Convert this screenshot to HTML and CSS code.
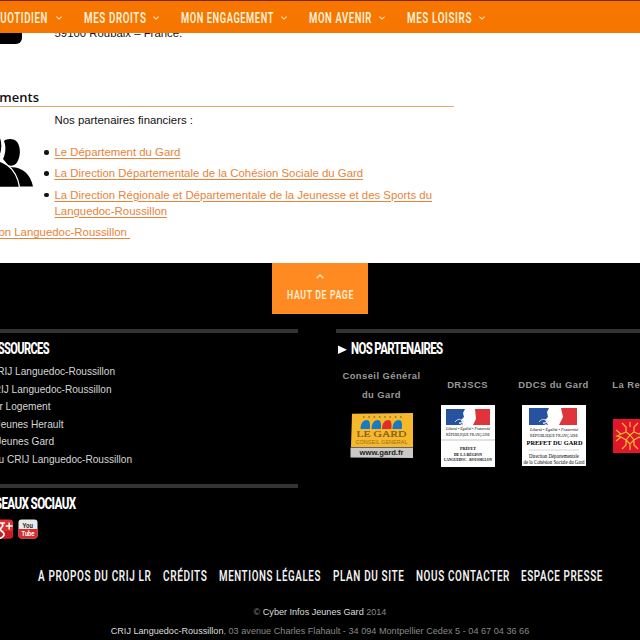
FILE: index.html
```html
<!DOCTYPE html>
<html lang="fr">
<head>
<meta charset="utf-8">
<title>Cyber Infos Jeunes Gard</title>
<link rel="stylesheet" href="styles.css">
</head>
<body>
<header class="topbar">
  <nav class="menu">
    <a class="entry"><svg class="cond" width="55" height="20"><text x="0" y="15" textLength="55" lengthAdjust="spacingAndGlyphs">QUOTIDIEN</text></svg><svg class="chev" viewBox="0 0 6 4"><path d="M.4.6 3 3.1 5.6.6"/></svg></a>
    <a class="entry"><svg class="cond" width="62" height="20"><text x="0" y="15" textLength="62.5" lengthAdjust="spacingAndGlyphs">MES DROITS</text></svg><svg class="chev" viewBox="0 0 6 4"><path d="M.4.6 3 3.1 5.6.6"/></svg></a>
    <a class="entry"><svg class="cond" width="92" height="20"><text x="0" y="15" textLength="93" lengthAdjust="spacingAndGlyphs">MON ENGAGEMENT</text></svg><svg class="chev" viewBox="0 0 6 4"><path d="M.4.6 3 3.1 5.6.6"/></svg></a>
    <a class="entry"><svg class="cond" width="62.500" height="20"><text x="0" y="15" textLength="63" lengthAdjust="spacingAndGlyphs">MON AVENIR</text></svg><svg class="chev" viewBox="0 0 6 4"><path d="M.4.6 3 3.1 5.6.6"/></svg></a>
    <a class="entry"><svg class="cond" width="64" height="20"><text x="0" y="15" textLength="65" lengthAdjust="spacingAndGlyphs">MES LOISIRS</text></svg><svg class="chev" viewBox="0 0 6 4"><path d="M.4.6 3 3.1 5.6.6"/></svg></a>
  </nav>
</header>

<main class="content">
  <section class="contact">
    <div class="tile"></div>
    <p class="address">59100 Roubaix – France.</p>
  </section>
  <h2 class="title"><span>Financements</span></h2>
  <section class="funding">
    <svg class="people" width="36" height="56" viewBox="0 0 36 56">
      <path d="M4 10C7 7.500 14 7 17.500 11.500 21 17 20.500 26 17 31.500 14.500 35 10.500 35.500 8 34L3 28C6 22 6 15 4 10z"/>
      <path d="M9 36.500c11-1.500 21 5 24 19H10z"/>
      <path class="front" d="M-14 30C2 26 17 37 19.500 56.500H-14z"/>
      <ellipse class="front" cx="-8" cy="15" rx="10" ry="16"/>
    </svg>
    <div class="text">
      <p>Nos partenaires financiers :</p>
      <ul>
        <li><a>Le Département du Gard</a></li>
        <li><a>La Direction Départementale de la Cohésion Sociale du Gard</a></li>
        <li><a>La Direction Régionale et Départementale de la Jeunesse et des Sports du<br>Languedoc-Roussillon</a></li>
      </ul>
    </div>
  </section>
  <p class="region"><a>La Région Languedoc-Roussillon&nbsp;</a></p>
</main>

<footer class="footer">
  <a class="totop">
    <svg class="up" viewBox="0 0 8 5"><path d="M.7 4.300 4 1 7.300 4.300"/></svg>
    <svg class="cond small" width="67" height="14"><text x="0" y="12" textLength="67" lengthAdjust="spacingAndGlyphs">HAUT DE PAGE</text></svg>
  </a>
  <div class="columns">
    <div class="left">
      <section class="box resources">
        <h3><svg class="head" width="50" height="18"><text x="-14.500" y="15" textLength="63.500" lengthAdjust="spacingAndGlyphs">RESSOURCES</text></svg></h3>
        <ul class="links">
          <li style="width:115px">Le site du CRIJ Languedoc-Roussillon</li>
          <li style="width:111.500px">Le blog CRIJ Languedoc-Roussillon</li>
          <li style="width:50.500px">Trouver Logement</li>
          <li style="width:63.500px">Cyber Infos Jeunes Herault</li>
          <li style="width:54px">Cyber Infos Jeunes Gard</li>
          <li style="width:132px">Facebook du CRIJ Languedoc-Roussillon</li>
        </ul>
      </section>
      <section class="box">
        <h3><svg class="head" width="77" height="18"><text x="-18" y="15" textLength="93.500" lengthAdjust="spacingAndGlyphs">RÉSEAUX SOCIAUX</text></svg></h3>
        <div class="social">
          <svg width="13" height="20" viewBox="0 0 13 20">
            <rect x="-7" y=".5" width="20" height="19" rx="3" fill="#dc2f2e"/>
            <path d="M-7 12H13V17Q13 19.500 10 19.500H-7z" fill="#c81d21"/>
            <path d="M5 4H-1M2 4.500C5 8-1 9 .500 11S6 14 3 17.500-4 18-4 18" fill="none" stroke="#fff" stroke-width="1.700"/>
            <path d="M9.200 3.500v7M5.700 7h7" stroke="#fff" stroke-width="1.500"/>
          </svg>
          <svg width="20" height="20" viewBox="0 0 20 20">
            <rect x=".5" y=".5" width="19" height="19" rx="3" fill="#e9e9e9"/>
            <path d="M.500 10h19v6.500q0 3-3 3h-13q-3 0-3-3z" fill="#d92c30"/>
            <text class="yt" x="4.500" y="8.500" textLength="10.500" lengthAdjust="spacingAndGlyphs" fill="#333">You</text>
            <text class="yt" x="3.500" y="17.200" textLength="13" lengthAdjust="spacingAndGlyphs" fill="#fff">Tube</text>
          </svg>
        </div>
      </section>
    </div>
    <section class="box partners">
      <h3><svg class="head" width="110" height="18"><path d="M2 6.500v8.500l9-4.250z"/><text x="15" y="15" textLength="91.500" lengthAdjust="spacingAndGlyphs">NOS PARTENAIRES</text></svg></h3>
      <div class="logos">
        <figure>
          <figcaption>Conseil Général<br>du Gard</figcaption>
          <svg width="64" height="46" viewBox="0 0 64 46">
            <path d="M2 .800 63 0v34H1z" fill="#f6b92c"/>
            <path d="M.500 34.500H63V45L.500 44.500z" fill="#c9c9c9"/>
            <path d="M13 4h39" stroke="#8c6b2b" stroke-width="1.500" stroke-dasharray="1.500 3.800"/>
            <g fill="#197bbd"><path d="M10.500 16c0-6 3-9 6.500-9 2.500 0 3.500 3 2.800 9z"/><path d="M21.500 16c0-6 3-9 6.500-9 2.500 0 3.500 3 2.800 9z"/><path d="M32 16c0-6 3-9 6.500-9 2.500 0 3.500 3 2.800 9z" fill="#df2d2b"/><path d="M42.500 16c0-6 3-9 6.500-9 2.500 0 3.500 3 2.800 9z"/></g>
            <text class="serif" x="6.500" y="24" font-size="9" textLength="50" lengthAdjust="spacingAndGlyphs" fill="#7d5420" stroke="#7d5420" stroke-width=".2">LE GARD</text>
            <text class="sans" x="5.500" y="31.300" font-size="5" textLength="52" lengthAdjust="spacingAndGlyphs" fill="#a06b1c">CONSEIL GENERAL</text>
            <text class="sans bold" x="9.500" y="42" font-size="7" textLength="44" lengthAdjust="spacingAndGlyphs" fill="#222">www.gard.fr</text>
          </svg>
        </figure>
        <figure>
          <figcaption>DRJSCS</figcaption>
          <svg width="54" height="62" viewBox="0 0 54 62">
            <path fill="#fff" d="M0 0h54v62H0z"/>
            <path fill="#26529f" d="M5 4h19l-2 4 1 4-3 3 2 5H5z"/><path fill="#df343a" d="M34 4h15v16H32l3-6z"/>
            <path d="M14 17c3-4 6-3 9 0l-5 1 4 2" fill="none" stroke="#dce4f2"/>
            <text class="serif it" x="5" y="25" font-size="4" textLength="44" lengthAdjust="spacingAndGlyphs">Liberté • Égalité • Fraternité</text>
            <text class="serif" x="5" y="31" font-size="4.500" textLength="44" lengthAdjust="spacingAndGlyphs">RÉPUBLIQUE FRANÇAISE</text>
            <path d="M0 35h54" stroke="#aaa" stroke-width=".7"/>
            <g class="serif bold" font-size="4.300"><text x="19" y="44.500" textLength="16" lengthAdjust="spacingAndGlyphs">PRÉFET</text><text x="13" y="50.500" textLength="28" lengthAdjust="spacingAndGlyphs">DE LA RÉGION</text><text x="3" y="56" textLength="48" lengthAdjust="spacingAndGlyphs">LANGUEDOC - ROUSSILLON</text></g>
          </svg>
        </figure>
        <figure>
          <figcaption>DDCS du Gard</figcaption>
          <svg width="64" height="61" viewBox="0 0 64 61">
            <path fill="#fff" d="M0 0h64v61H0z"/>
            <path fill="#26529f" d="M7 3h20l-2 4 1 5-3 3 3 5H7z"/><path fill="#df343a" d="M39 3h16v17H37l4-8z"/>
            <path d="M17 17c3-4 6-3 10 0l-6 1 4 2" fill="none" stroke="#dce4f2"/>
            <text class="serif it" x="8" y="25.500" font-size="4.300" textLength="48" lengthAdjust="spacingAndGlyphs">Liberté • Égalité • Fraternité</text>
            <text class="serif" x="8" y="32" font-size="4.700" textLength="48" lengthAdjust="spacingAndGlyphs">RÉPUBLIQUE FRANÇAISE</text>
            <text class="serif bold" x="4.500" y="40" font-size="6.300" textLength="56" lengthAdjust="spacingAndGlyphs">PREFET DU GARD</text>
            <path d="M7 45h50" stroke="#aaa" stroke-width=".5"/>
            <text class="serif" x="7" y="53" font-size="5.400" textLength="50" lengthAdjust="spacingAndGlyphs">Direction Départementale</text>
            <text class="serif" x="1.500" y="59" font-size="5.400" textLength="61" lengthAdjust="spacingAndGlyphs">de la Cohésion Sociale du Gard</text>
          </svg>
        </figure>
        <figure class="last">
          <figcaption>La Region</figcaption>
          <svg width="54" height="34" viewBox="0 0 54 34">
            <path fill="#e1162a" d="M0 0h54v34H0z"/>
            <g fill="none" stroke="#f7bd35" stroke-width="1.200"><path d="m9 4 4 4v5l4 3 4-3V8l4-4M17 3v5M3 11l5 4 5-2M3 22l5-4 5 3M8 15l-4 2 4 1M13 13l4 3-4 5M17 16l4 5-4 4-4-4M9 30l4-4v-5M17 25v6M25 30l-4-4v-5M21 13l5 2 5-4M21 21l5-3 5 4"/></g>
          </svg>
        </figure>
      </div>
    </section>
  </div>
  <nav class="footnav">
    <svg class="cond" width="113" height="18"><text x="0" y="14" textLength="113.500" lengthAdjust="spacingAndGlyphs">A PROPOS DU CRIJ LR</text></svg>
    <svg class="cond" width="44" height="18"><text x="0" y="14" textLength="44.500" lengthAdjust="spacingAndGlyphs">CRÉDITS</text></svg>
    <svg class="cond" width="101.500" height="18"><text x="0" y="14" textLength="102" lengthAdjust="spacingAndGlyphs">MENTIONS LÉGALES</text></svg>
    <svg class="cond" width="71" height="18"><text x="0" y="14" textLength="71.500" lengthAdjust="spacingAndGlyphs">PLAN DU SITE</text></svg>
    <svg class="cond" width="93.500" height="18"><text x="0" y="14" textLength="94" lengthAdjust="spacingAndGlyphs">NOUS CONTACTER</text></svg>
    <svg class="cond" width="82" height="18"><text x="0" y="14" textLength="82" lengthAdjust="spacingAndGlyphs">ESPACE PRESSE</text></svg>
  </nav>
  <p class="legal"><span class="c">© <b>Cyber Infos Jeunes Gard</b> 2014</span></p>
  <p class="legal"><b class="org">CRIJ Languedoc-Roussillon</b><span class="addr">, 03 avenue Charles Flahault - 34 094 Montpellier Cedex 5 - 04 67 04 36 66</span></p>
</footer>
</body>
</html>
```
FILE: styles.css
```css
* { box-sizing: border-box; margin: 0; padding: 0; }
body {
  width: 640px;
  height: 640px;
  overflow: hidden;
  background: #fff;
  color: #111;
  font: 11.38px/16px "Liberation Sans", Arial, sans-serif;
}
ul { list-style: none; }
svg { display: block; flex: none; }

.cond, .head { overflow: visible; }
.cond text {
  font: 600 14.4px Roboto, sans-serif;
  letter-spacing: .9px;
  fill: currentColor;
}
.cond.small text { font-size: 12.4px; }
.head { fill: #fff; }
.head text { font: 800 16.8px Roboto, sans-serif; letter-spacing: -.9px; }

.topbar {
  height: 33px;
  background: #f67600;
  border-top: 1px solid #7a2608;
  color: #fff3dc;
  overflow: hidden;
}
.menu { display: flex; gap: 22px; margin-left: -7.200px; padding-top: 7px; }
.entry { display: flex; align-items: center; gap: 7.700px; }
.chev { width: 6px; height: 4px; fill: none; stroke: #ffe3bd; stroke-width: 1.1; }

.content { height: 230px; overflow: hidden; }
.contact { display: flex; height: 57px; }
.tile { width: 22px; height: 10.500px; background: #000; border-bottom-right-radius: 6px; }
.address { margin: -8px 0 0 32.500px; }
.title {
  display: flex;
  justify-content: flex-end;
  width: 453.500px;
  height: 16.500px;
  padding-right: 414.500px;
  border-bottom: 1px solid #dfa970;
  font: 600 13px/14px "Open Sans", sans-serif;
  white-space: nowrap;
}
.funding { display: flex; height: 117.500px; padding-top: 5.500px; }
.people { margin: 19px 0 0; }
.people .front { stroke: #fff; stroke-width: 1.3; }
.text { padding-left: 18.500px; }
.text ul { margin-top: 16px; }
.text li { position: relative; margin-bottom: 5.300px; }
.text li::before {
  content: "";
  position: absolute;
  left: -10.500px;
  top: 6px;
  width: 4.500px;
  height: 4.500px;
  border-radius: 50%;
  background: #111;
}
.content a { color: #e8833a; text-decoration: underline; text-underline-offset: 1.500px; }
.region { display: flex; justify-content: flex-end; width: 130px; white-space: nowrap; }

.footer { height: 377px; background: #000; overflow: hidden; }
.totop {
  display: flex;
  flex-direction: column;
  align-items: center;
  width: 96px;
  height: 51px;
  margin-left: 272px;
  padding-top: 11px;
  background: #ff8a21;
  color: #fff0d5;
}
.up { width: 8px; height: 5px; margin-bottom: 8px; fill: none; stroke: #ffe6c4; stroke-width: 1.4; }
.columns { display: flex; gap: 37.500px; height: 241px; padding-top: 15px; }
.left { width: 298px; overflow: hidden; }
.box { border-top: 4px solid #333; padding-top: 6px; }
.box h3 { height: 18px; }
.resources { height: 155px; }
.links { padding-top: 6px; color: #d6d6d6; font-size: 10.100px; line-height: 17.500px; }
.links li { display: flex; justify-content: flex-end; white-space: nowrap; }
.social { display: flex; gap: 5px; padding-top: 7px; }
.yt { font: 700 8px Roboto, sans-serif; }
.partners { width: 304.500px; overflow: hidden; }
.logos { display: grid; grid-template-columns: repeat(4, 86px); margin: 10px 0 0 3px; }
.logos figure { display: flex; flex-direction: column; align-items: center; height: 100px; }
.logos figcaption {
  display: flex;
  align-items: center;
  height: 37px;
  color: #999;
  font: 700 9.400px/18.500px "Liberation Sans", Arial, sans-serif;
  letter-spacing: .45px;
  text-align: center;
  white-space: nowrap;
}
.logos .last figcaption { padding-right: 5px; }
.logos svg { margin: auto 0; }
.serif { font-family: "Liberation Serif", serif; }
.sans { font-family: "Liberation Sans", sans-serif; }
.bold { font-weight: 700; }
.it { font-style: italic; }

.footnav { display: flex; gap: 12px; height: 48px; margin: 0 0 0 38px; padding-top: 12px; color: #f2f2f2; }
.legal {
  height: 18.500px;
  text-align: center;
  color: #888;
  font-size: 9.100px;
  line-height: 18.500px;
  white-space: nowrap;
}
.legal b { color: #ddd; font-weight: 400; }
.c { letter-spacing: -.01px; }
.addr { letter-spacing: .02px; }
```
